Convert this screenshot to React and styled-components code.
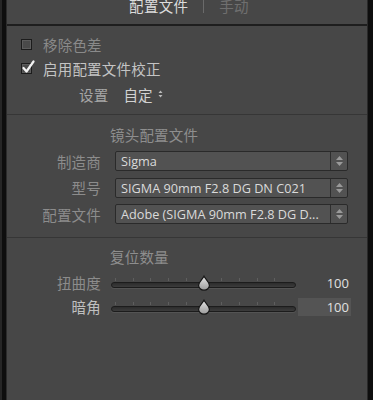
import React from "react";
import styled, { createGlobalStyle } from "styled-components";

const Global = createGlobalStyle`
  html, body { margin: 0; padding: 0; background: #111; }
  body { font-family: "Noto Sans CJK SC", "Noto Sans", sans-serif; }
`;

const Frame = styled.div`
  display: flex;
  height: 400px;
  width: 373px;
  background: #111;
  overflow: hidden;
`;

const LeftBezel = styled.div`
  width: 7px;
  flex: none;
  box-sizing: border-box;
  background: #0e0e0e;
  border-left: 2px solid #262626;
  border-right: 1px solid #2c2c2c;
`;

const RightBezel = styled.div`
  width: 6px;
  flex: none;
  box-sizing: border-box;
  background: #0e0e0e;
  border-left: 1px solid #2a2a2a;
`;

const Panel = styled.div`
  flex: 1;
  display: flex;
  flex-direction: column;
  background: #474747;
  min-width: 0;
`;

const TabBar = styled.div`
  height: 24px;
  flex: none;
  display: flex;
  justify-content: center;
  align-items: flex-start;
  border-bottom: 2px solid #1e1e1e;
  overflow: hidden;
  padding-left: 4px;
`;

const Tab = styled.span`
  font-size: 14.5px;
  line-height: 14px;
  margin-top: -1px;
  color: ${(p) => (p.$active ? "#dcdcdc" : "#6f6f6f")};
  letter-spacing: 0.3px;
`;

const TabDivider = styled.span`
  width: 1px;
  height: 13px;
  background: #6a6a6a;
  margin: 0 15px;
`;

const Section = styled.div`
  display: flex;
  flex-direction: column;
  padding: ${(p) => p.$pad || "0"};
  border-bottom: ${(p) => (p.$sep ? "1px solid #363636" : "none")};
`;

const CheckRow = styled.div`
  height: 24px;
  display: flex;
  align-items: center;
  padding-left: 14px;
`;

const Box = styled.span`
  width: 11px;
  height: 11px;
  box-sizing: border-box;
  border: 1px solid #1c1c1c;
  background: #4a4a4a;
  box-shadow: inset 0 0 0 1px #5c5c5c;
  position: relative;
  flex: none;
`;

const CheckMark = styled.svg`
  position: absolute;
  left: 0px;
  top: -4px;
`;

const CheckLabel = styled.span`
  margin-left: 11px;
  font-size: 14.5px;
  letter-spacing: 0.2px;
  color: ${(p) => (p.$on ? "#c4c4c4" : "#8a8a8a")};
`;

const SettingRow = styled.div`
  height: 28px;
  display: flex;
  align-items: center;
  padding-left: 72px;
`;

const SettingLabel = styled.span`
  font-size: 14.5px;
  color: #a6a6a6;
  letter-spacing: 0.2px;
`;

const SettingValue = styled.span`
  margin-left: 15px;
  font-size: 14.5px;
  color: #d2d2d2;
  letter-spacing: 0.2px;
`;

const TinyArrows = styled.svg`
  margin-left: 5px;
`;

const SectionTitle = styled.div`
  height: 24px;
  display: flex;
  align-items: center;
  padding-left: 103px;
  font-size: 14.5px;
  letter-spacing: 0.2px;
  color: #8e8e8e;
  margin-bottom: 2px;
`;

const FieldRow = styled.div`
  height: 26.5px;
  display: grid;
  grid-template-columns: 94px 1fr;
  column-gap: 14px;
  align-items: center;
  padding-right: 19px;
`;

const FieldLabel = styled.span`
  text-align: right;
  font-size: 14.5px;
  letter-spacing: 0.2px;
  color: #8c8c8c;
  white-space: nowrap;
`;

const Select = styled.div`
  height: 20px;
  box-sizing: border-box;
  display: flex;
  align-items: stretch;
  background: #525252;
  border: 1px solid #2a2a2a;
  border-radius: 2px;
  min-width: 0;
`;

const SelectText = styled.span`
  flex: 1;
  min-width: 0;
  padding-left: 5px;
  font-family: "Open Sans", "Noto Sans", sans-serif;
  font-size: 12.7px;
  line-height: 18px;
  color: #dadada;
  white-space: nowrap;
  overflow: hidden;
`;

const SelectArrow = styled.span`
  width: 16px;
  flex: none;
  display: flex;
  align-items: center;
  justify-content: center;
  border-left: 1px solid #2e2e2e;
`;

const SliderRow = styled.div`
  height: 24px;
  display: flex;
  align-items: center;
  padding-right: 16px;
`;

const SliderLabel = styled.span`
  width: 94px;
  flex: none;
  text-align: right;
  font-size: 14.5px;
  letter-spacing: 0.2px;
  color: ${(p) => (p.$on ? "#c0c0c0" : "#8c8c8c")};
`;

const TrackWrap = styled.div`
  flex: 1;
  margin-left: 10px;
  height: 24px;
  display: flex;
  flex-direction: column;
  justify-content: center;
  position: relative;
`;

const Ticks = styled.div`
  height: 3px;
  margin: 0 4px 1px;
  background: repeating-linear-gradient(
    to right,
    #5e5e5e 0,
    #5e5e5e 1px,
    transparent 1px,
    transparent 17.7px
  );
`;

const Track = styled.div`
  height: 6px;
  box-sizing: border-box;
  border: 1px solid #1c1c1c;
  border-radius: 3px;
  background: linear-gradient(#2c2c2c, #3c3c3c);
  box-shadow: 0 1px 0 #545454;
`;

const Thumb = styled.svg`
  position: absolute;
  top: 4px;
  transform: translateX(-50%);
`;

const Value = styled.span`
  width: 53px;
  height: 18px;
  flex: none;
  margin-left: 2px;
  box-sizing: border-box;
  padding-right: 2px;
  display: flex;
  align-items: center;
  justify-content: flex-end;
  background: ${(p) => (p.$focus ? "#545454" : "transparent")};
  font-family: "Open Sans", "Noto Sans", sans-serif;
  font-size: 13px;
  color: #e0e0e0;
`;

const Spacer = styled.div`
  flex: 1;
`;

const UpDown = ({ w = 9, h = 12, color = "#9a9a9a" }) => (
  <svg width={w} height={h} viewBox="0 0 9 12">
    <path d="M4.5 1 L8 5 L1 5 Z" fill={color} />
    <path d="M4.5 11 L8 7 L1 7 Z" fill={color} />
  </svg>
);

const ThumbIcon = ({ pos }) => (
  <Thumb width="14" height="16" viewBox="0 0 14 16" style={{ left: `${pos}%` }}>
    <defs>
      <linearGradient id="tg" x1="0" y1="0" x2="0" y2="1">
        <stop offset="0" stopColor="#e6e6e6" />
        <stop offset="1" stopColor="#9a9a9a" />
      </linearGradient>
    </defs>
    <path
      d="M7 1.2 C8.6 4.5 12.4 7 12.4 10.2 A5.4 5 0 0 1 1.6 10.2 C1.6 7 5.4 4.5 7 1.2 Z"
      fill="url(#tg)"
      stroke="#141414"
      strokeWidth="1.2"
    />
  </Thumb>
);

const Slider = ({ label, value, focus }) => (
  <SliderRow>
    <SliderLabel $on={focus}>{label}</SliderLabel>
    <TrackWrap>
      <Ticks />
      <Track />
      <ThumbIcon pos={50} />
    </TrackWrap>
    <Value $focus={focus}>{value}</Value>
  </SliderRow>
);

const Field = ({ label, value }) => (
  <FieldRow>
    <FieldLabel>{label}</FieldLabel>
    <Select>
      <SelectText>{value}</SelectText>
      <SelectArrow>
        <UpDown />
      </SelectArrow>
    </Select>
  </FieldRow>
);

export default function App() {
  return (
    <>
      <Global />
      <Frame>
        <LeftBezel />
        <Panel>
          <TabBar>
            <Tab $active>配置文件</Tab>
            <TabDivider />
            <Tab>手动</Tab>
          </TabBar>
          <Section $pad="6px 0 6px" $sep>
            <CheckRow>
              <Box />
              <CheckLabel>移除色差</CheckLabel>
            </CheckRow>
            <CheckRow>
              <Box>
                <CheckMark width="13" height="14" viewBox="0 0 13 14">
                  <path
                    d="M1.5 8 L4.5 11.5 L11.5 1.5"
                    fill="none"
                    stroke="#f2f2f2"
                    strokeWidth="2.2"
                    strokeLinecap="round"
                    strokeLinejoin="round"
                  />
                </CheckMark>
              </Box>
              <CheckLabel $on>启用配置文件校正</CheckLabel>
            </CheckRow>
            <SettingRow>
              <SettingLabel>设置</SettingLabel>
              <SettingValue>自定</SettingValue>
              <TinyArrows width="5" height="8" viewBox="0 0 5 8">
                <path d="M2.5 0.5 L4.5 3 L0.5 3 Z" fill="#bbbbbb" />
                <path d="M2.5 7.5 L4.5 5 L0.5 5 Z" fill="#bbbbbb" />
              </TinyArrows>
            </SettingRow>
          </Section>
          <Section $pad="7px 0 9px" $sep>
            <SectionTitle>镜头配置文件</SectionTitle>
            <Field label="制造商" value="Sigma" />
            <Field label="型号" value="SIGMA 90mm F2.8 DG DN C021" />
            <Field label="配置文件" value="Adobe (SIGMA 90mm F2.8 DG D..." />
          </Section>
          <Section $pad="7px 0 0">
            <SectionTitle>复位数量</SectionTitle>
            <Slider label="扭曲度" value="100" />
            <Slider label="暗角" value="100" focus />
          </Section>
          <Spacer />
        </Panel>
        <RightBezel />
      </Frame>
    </>
  );
}
